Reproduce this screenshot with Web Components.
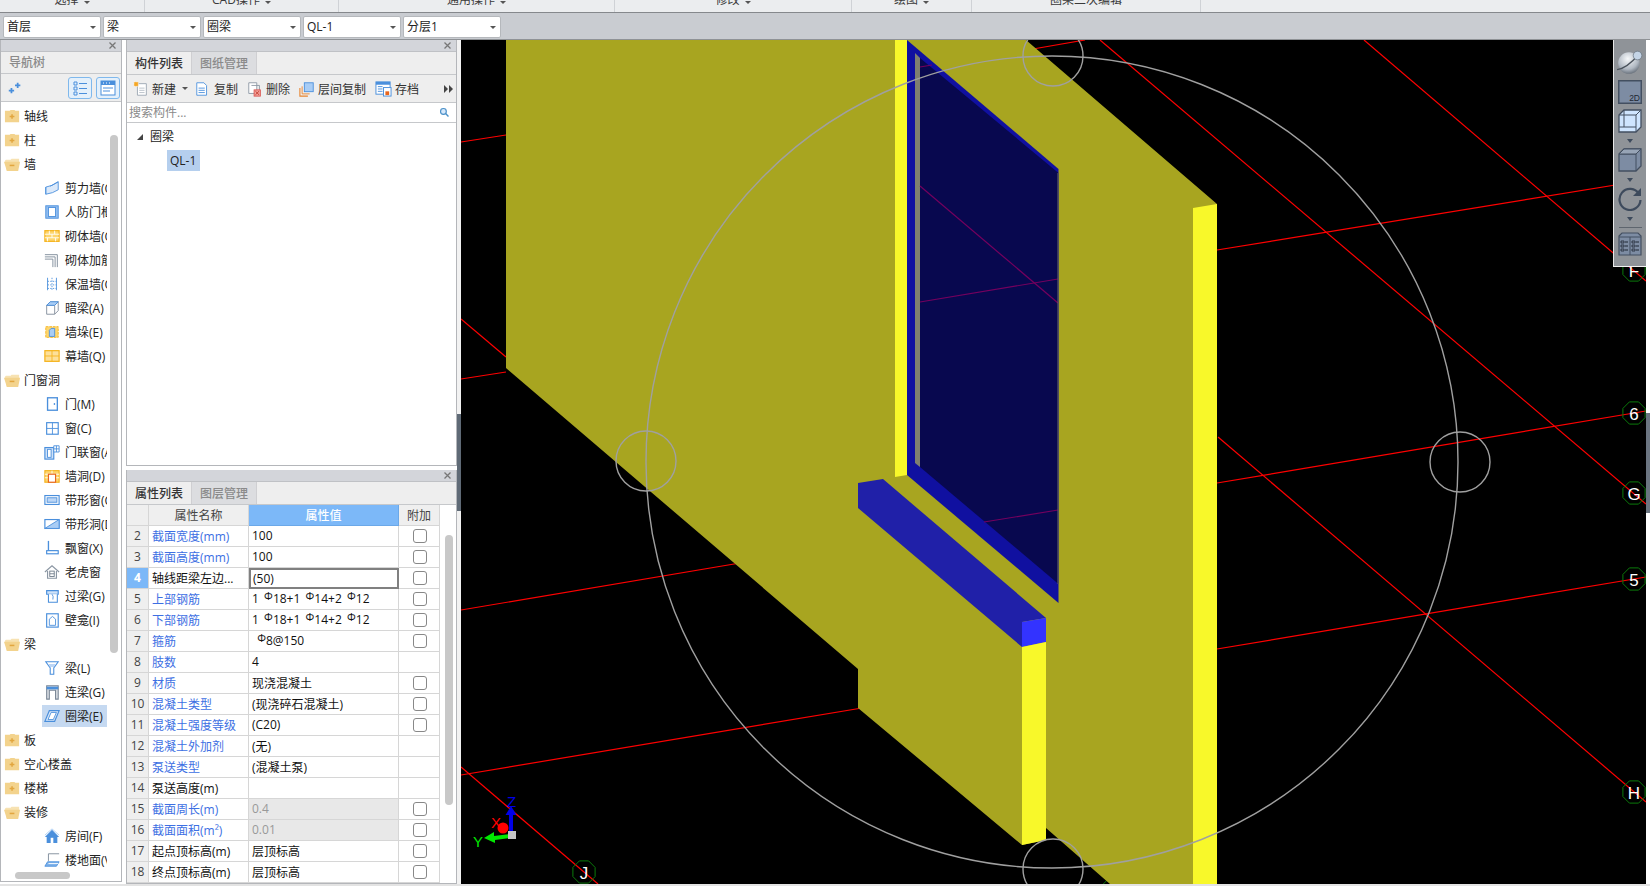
<!DOCTYPE html>
<html lang="zh">
<head>
<meta charset="utf-8">
<title>圈梁</title>
<style>
html, body
{
    margin: 0;
    height: 100%;
    overflow: hidden;
    background: #fff;
    font-family: "Open Sans", "Noto Sans CJK SC", "Liberation Sans", sans-serif;
    font-size: 12px;
    color: #222;
}
</style>
</head>
<body>
<gcl-app></gcl-app>

<script>
const BLUE = '#4a8fdc'
const ORANGE = '#f5b31e'

// all tree and toolbar icons, drawn on a 18x18 box
const ICONS =
{
    shear: `<path d="M2 8q7-1 14-6v9q-6 4-14 5z" fill="#dbe9fa" stroke="${BLUE}"/><path d="M2 8v8M7 7l9-5" stroke="${BLUE}" fill="none"/>`,
    frame: `<rect x="2" y="2" width="14" height="14" fill="#8fbcf0" stroke="${BLUE}"/><rect x="5" y="4" width="8" height="10" fill="#fff" stroke="${BLUE}"/>`,
    brick: `<rect x="1" y="3" width="16" height="12" fill="#fdd66f" stroke="${ORANGE}" stroke-width="1.4"/><path d="M1 7h16M1 11h16M6 3v4M12 3v4M9 7v4M4 11v4M13 11v4" stroke="#fff"/>`,
    rebar: `<path d="M1 3h14v14M1 5.500h11.500v11.500M1 8h9v9" fill="none" stroke="#7a8796"/>`,
    insul: `<path d="M4 2v14M14 2v14" stroke="${BLUE}"/><path d="M9 2v14M4 6h10M4 10h10M4 14h10" stroke="${BLUE}" stroke-dasharray="1.500 1.500"/>`,
    hidden: `<path d="M3 6l4-4h9v10l-4 4H3z" fill="#fff" stroke="#7f8b99"/><path d="M3 6h9v10M12 6l4-4" fill="none" stroke="#7f8b99"/><path d="M7 2h9l-4 4H3z" fill="#a9cdf5" stroke="${BLUE}"/>`,
    pier: `<rect x="2" y="3" width="14" height="12" fill="#fdd66f" stroke="${ORANGE}" stroke-dasharray="3 1"/><path d="M6 7l2-2h4v9H6z" fill="#a9cdf5" stroke="${BLUE}"/>`,
    curtain: `<rect x="1" y="3" width="16" height="12" fill="#fde09a" stroke="${ORANGE}" stroke-width="1.400"/><path d="M1 9h16M9 3v12" stroke="${ORANGE}"/>`,
    door: `<rect x="4" y="2" width="11" height="14" fill="#fff" stroke="${BLUE}" stroke-width="1.500"/><rect x="11" y="8" width="1.500" height="2" fill="${BLUE}"/>`,
    window: `<rect x="3" y="3" width="13" height="13" fill="#fff" stroke="${BLUE}" stroke-width="1.300"/><path d="M9.500 3v13M3 9.500h13" stroke="${BLUE}"/>`,
    doorwin: `<rect x="1" y="4" width="10" height="13" fill="#cfe2f9" stroke="${BLUE}" stroke-width="1.300"/><rect x="4" y="6" width="4" height="9" fill="#fff" stroke="${BLUE}"/><path d="M11 2h6v7h-6zM14 2v7M11 5.500h6" fill="#fff" stroke="${BLUE}"/>`,
    hole: `<rect x="1" y="3" width="16" height="13" fill="#fdd66f" stroke="${ORANGE}" stroke-width="1.300"/><path d="M1 7h16M1 11h16M9 3v4" stroke="#fff"/><rect x="5" y="7" width="8" height="9" fill="#fff" stroke="#e8661e" stroke-width="1.300"/>`,
    strip: `<rect x="1" y="4" width="16" height="10" fill="#fff" stroke="${BLUE}" stroke-width="1.300"/><rect x="3.500" y="6.500" width="11" height="5" fill="#bcd6f6" stroke="${BLUE}"/>`,
    striphole: `<rect x="1" y="4" width="16" height="10" fill="#fff" stroke="${BLUE}" stroke-width="1.300"/><path d="M1 14L17 4v10z" fill="#a9cdf5" stroke="${BLUE}"/>`,
    bay: `<path d="M5 1v11" stroke="${BLUE}" stroke-width="1.500"/><path d="M5 12h10" stroke="${BLUE}"/><rect x="3" y="12" width="13" height="3.500" fill="#fff" stroke="${BLUE}" stroke-width="1.300"/>`,
    dormer: `<path d="M1 9l8-7 8 7M4 8v8h10V8" fill="#fff" stroke="#8b96a3" stroke-width="1.300"/><rect x="6.500" y="8" width="5" height="6" fill="#fff" stroke="#6d7a88"/><path d="M6.500 11h5" stroke="#6d7a88"/>`,
    lintel: `<path d="M3 3h13v4H3z" fill="#cfe2f9" stroke="${BLUE}" stroke-width="1.300"/><path d="M5 7v9h10V7" fill="#fff" stroke="${BLUE}" stroke-width="1.200"/><path d="M9 7q2 2 1 6" fill="none" stroke="${BLUE}"/>`,
    niche: `<rect x="3" y="2" width="13" height="15" fill="#fff" stroke="${BLUE}" stroke-width="1.300"/><path d="M6 15V8l3.500-3 3.500 3v7z" fill="#fff" stroke="${BLUE}"/>`,
    beam: `<path d="M2 2h14l-5 7v7H7V9z" fill="#fff" stroke="${BLUE}" stroke-width="1.200"/><path d="M4.500 4.500h9L11 8H7z" fill="#bcd6f6"/>`,
    link: `<path d="M3 2h13v15h-3V7H6v10H3z" fill="#d9dde2" stroke="#7a8796" stroke-width="1.200"/><rect x="3" y="3" width="13" height="3" fill="${BLUE}"/>`,
    ring: `<path d="M6 3h11l-5 12H1z" fill="#dbe9fa" stroke="${BLUE}" stroke-width="1.300"/><path d="M8 5h6l-3.500 8H4.500z" fill="#fff" stroke="${BLUE}"/>`,
    room: `<path d="M1 10l8-8 8 8h-2v7H3v-7z" fill="${BLUE}"/><path d="M1 8l8-7 8 7" fill="none" stroke="#a9cdf5"/><rect x="7.500" y="11" width="3" height="6" fill="#fff"/>`,
    floor: `<path d="M5 10V2h12" fill="none" stroke="#7a8796"/><path d="M4 11h13l-3 5H1z" fill="#7db1ea" stroke="${BLUE}"/><path d="M5 13h11" stroke="#fff"/>`,
    folderplus: `<path d="M1 3h5l1-1h4l1 1h4v12H1z" fill="#f3d38d"/><path d="M6 9h5M8.500 6.500v5" stroke="#e2a63f" stroke-width="1.600"/>`,
    folderminus: `<path d="M1 5l1-1h5l1-1h8v4H4l-1 9z" fill="#f7e2b2"/><path d="M0 6h16l1 0-2 10H3z" fill="#f3d38d"/><path d="M6 10h5" stroke="#e2a63f" stroke-width="1.600"/>`,
    newdoc: `<path d="M5 3h10v13H5z" fill="#fff" stroke="#9aa5b1"/><path d="M7 8h6M7 10.500h6M7 13h6" stroke="#b6bec7"/><rect x="1" y="1" width="5" height="5" fill="#f5a623" stroke="#fff" stroke-dasharray="1 1"/>`,
    copydoc: `<path d="M2 2h8l3 3v11H2z" fill="#fff" stroke="${BLUE}"/><path d="M4 8h7M4 10.500h7M4 13h7" stroke="${BLUE}"/>`,
    deldoc: `<path d="M2 2h9v12H2z" fill="#fff" stroke="#8b96a3"/><path d="M5 5h9v8" fill="none" stroke="#8b96a3"/><rect x="8" y="10" width="7" height="7" fill="#f3a19a" stroke="#d9534f"/><path d="M9.500 11.500l4 4M13.500 11.500l-4 4" stroke="#c0392b"/>`,
    floorcopy: `<path d="M1 8v9h9" fill="none" stroke="#e8842e" stroke-width="1.200"/><path d="M3.500 6v8.500H12" fill="none" stroke="#e8842e"/><rect x="6" y="2" width="10" height="10" fill="#a9cdf5" stroke="${BLUE}"/>`,
    archive: `<rect x="1" y="2" width="15" height="13" fill="#fff" stroke="${BLUE}"/><rect x="1" y="2" width="15" height="3" fill="${BLUE}"/><path d="M3 7h5M3 9.500h5M3 12h5" stroke="${BLUE}"/><rect x="9" y="8" width="8" height="9" fill="#fff" stroke="${BLUE}"/><rect x="11" y="12" width="4" height="4" fill="#e8661e"/>`,
    pin: `<path d="M2 12h6M5 9v6M9 6h6M12 3v6" stroke="${BLUE}" stroke-width="2"/>`,
    listview: `<path d="M3 3h3v3H3zM3 8h3v3H3zM3 13h3v3H3z" fill="none" stroke="${BLUE}"/><path d="M8 4.500h8M8 9.500h8M8 14.500h8" stroke="${BLUE}"/>`,
    cardview: `<rect x="2" y="2" width="14" height="14" fill="#fff" stroke="${BLUE}"/><rect x="2" y="2" width="14" height="4" fill="${BLUE}"/><path d="M4 9h10M4 12h7" stroke="${BLUE}"/><path d="M4 4h1M7 4h1M10 4h1" stroke="#fff"/>`,
    search: `<circle cx="7.500" cy="7.500" r="4" fill="#d6e8fb" stroke="#4a90c8" stroke-width="1.600"/><path d="M10.500 10.500l4 4" stroke="#4a90c8" stroke-width="2"/>`
}

function iconSvg(name, size)
{
    return `<svg width="${size}" height="${size}" viewBox="0 0 18 18" style="display:block;flex:none">${ICONS[name]}</svg>`
}

/* GCL-RIBBON-TAIL: the bottom of the ribbon with its cut off group titles */

class GCLRibbonTail extends HTMLElement
{
    constructor()
    {
        super()

        const groups = [['选择', 145, 1], ['CAD操作', 194, 1], ['通用操作', 276, 1], ['修改', 237, 1], ['绘图', 120, 1], ['圈梁二次编辑', 229, 0]]

        this.attachShadow({mode: 'open'})

        this.shadowRoot.innerHTML =
        `
        <style>
        :host
        {
            display: flex;
            height: 12px;
            overflow: hidden;
            background: #ebedef;
            border-bottom: 1px solid #85888c;
        }
        .group
        {
            display: flex;
            justify-content: center;
            gap: 5px;
            height: 12px;
            box-sizing: border-box;
            border-right: 1px solid #cfd2d6;
            line-height: 12px;
            color: #3a3a3a;
        }
        .group span
        {
            margin-top: -6px;
        }
        .caret
        {
            margin-top: 1px;
            width: 0;
            height: 0;
            border: 3px solid transparent;
            border-top-color: #555;
        }
        </style>
        ${groups.map(g => `<div class="group" style="width:${g[1]}px"><span>${g[0]}</span>${g[2] ? '<i class="caret"></i>' : ''}</div>`).join('')}
        `
    }
}

customElements.define('gcl-ribbon-tail', GCLRibbonTail)

/* GCL-COMBO */

const comboTemplate = document.createElement('template')

comboTemplate.innerHTML =
`
<style>
:host
{
    display: flex;
    align-items: center;
    justify-content: space-between;
    box-sizing: border-box;
    width: 98px;
    height: 22px;
    padding: 0 4px 1px 3px;
    background: #fff;
    border: 1px solid #b5b8bc;
    border-radius: 2px;
    font-size: 12px;
    line-height: 16px;
    color: #222;
}
i
{
    width: 0;
    height: 0;
    margin-top: 4px;
    border: 3px solid transparent;
    border-top-color: #555;
}
</style>
<slot></slot><i></i>
`

class GCLCombo extends HTMLElement
{
    constructor()
    {
        super()

        this.attachShadow({mode: 'open'})

        this.shadowRoot.appendChild(comboTemplate.content.cloneNode(true))
    }
}

customElements.define('gcl-combo', GCLCombo)

/* GCL-COMBO-BAR */

const comboBarTemplate = document.createElement('template')

comboBarTemplate.innerHTML =
`
<style>
:host
{
    display: flex;
    align-items: flex-start;
    gap: 2px;
    box-sizing: border-box;
    height: 27px;
    padding: 3px 0 0 3px;
    background: #c9ccd1;
    border-bottom: 1px solid #8f9296;
}
</style>
<gcl-combo>首层</gcl-combo>
<gcl-combo>梁</gcl-combo>
<gcl-combo>圈梁</gcl-combo>
<gcl-combo>QL-1</gcl-combo>
<gcl-combo>分层1</gcl-combo>
`

class GCLComboBar extends HTMLElement
{
    constructor()
    {
        super()

        this.attachShadow({mode: 'open'})

        this.shadowRoot.appendChild(comboBarTemplate.content.cloneNode(true))
    }
}

customElements.define('gcl-combo-bar', GCLComboBar)

/* GCL-PANEL: grey strip with a close cross, and the content under it */

const panelTemplate = document.createElement('template')

panelTemplate.innerHTML =
`
<style>
:host
{
    display: flex;
    flex-direction: column;
    box-sizing: border-box;
    border: 1px solid #b4b6ba;
    border-top: 0;
    background: #fff;
    overflow: hidden;
}
#strip
{
    flex: none;
    display: flex;
    align-items: center;
    justify-content: flex-end;
    box-sizing: border-box;
    height: 12px;
    padding-right: 5px;
    background: #d3d5da;
    border-bottom: 1px solid #bfc1c5;
}
</style>
<div id="strip">
    <svg width="7" height="7" viewBox="0 0 7 7"><path d="M.5.500l6 6M6.500.500l-6 6" stroke="#777" stroke-width="1.300"/></svg>
</div>
<slot></slot>
`

class GCLPanel extends HTMLElement
{
    constructor()
    {
        super()

        this.attachShadow({mode: 'open'})

        this.shadowRoot.appendChild(panelTemplate.content.cloneNode(true))
    }
}

customElements.define('gcl-panel', GCLPanel)

/* GCL-TABS */

const tabsTemplate = document.createElement('template')

tabsTemplate.innerHTML =
`
<style>
:host
{
    display: flex;
    flex: none;
    height: 23px;
    box-sizing: border-box;
    background: #eee;
    border-bottom: 1px solid #c6c8cb;
}
span
{
    display: flex;
    align-items: center;
    padding: 0 8px 1px;
    width: 48px;
    font-weight: 500;
    color: #333;
    white-space: nowrap;
}
span + span
{
    background: #dcdde0;
    color: #8a8a8a;
    border-left: 1px solid #cfcfd2;
    border-right: 1px solid #cfcfd2;
}
</style>
`

class GCLTabs extends HTMLElement
{
    constructor()
    {
        super()

        this.attachShadow({mode: 'open'})

        this.shadowRoot.appendChild(tabsTemplate.content.cloneNode(true))
    }

    connectedCallback()
    {
        this.getAttribute('items').split(',').forEach(item =>
        {
            const tab = document.createElement('span')

            tab.textContent = item

            this.shadowRoot.appendChild(tab)
        })
    }
}

customElements.define('gcl-tabs', GCLTabs)

/* GCL-TREE-ROW */

const treeRowTemplate = document.createElement('template')

treeRowTemplate.innerHTML =
`
<style>
:host
{
    display: flex;
    align-items: center;
    box-sizing: border-box;
    height: 24px;
    white-space: nowrap;
    overflow: hidden;
    color: #222;
}
:host([depth="0"])
{
    padding-left: 3px;
}
:host([depth="0"]) #box
{
    gap: 3px;
}
:host([depth="1"])
{
    padding-left: 43px;
}
#box
{
    display: flex;
    align-items: center;
    gap: 5px;
    height: 22px;
    margin-left: -2px;
    padding-left: 2px;
    flex: 1;
    overflow: hidden;
}
:host([selected]) #box
{
    background: #c5d9f1;
}
</style>
<div id="box"><span id="icon"></span><slot></slot></div>
`

class GCLTreeRow extends HTMLElement
{
    constructor()
    {
        super()

        this.attachShadow({mode: 'open'})

        this.shadowRoot.appendChild(treeRowTemplate.content.cloneNode(true))
    }

    connectedCallback()
    {
        const depth = this.getAttribute('depth')

        this.shadowRoot.querySelector('#icon').outerHTML = iconSvg(this.getAttribute('icon'), depth == '0' ? 17 : 16)
    }
}

customElements.define('gcl-tree-row', GCLTreeRow)

/* GCL-NAV-PANEL */

const NAV_ROWS =
[
    ['folderplus', '轴线'], ['folderplus', '柱'], ['folderminus', '墙'],
    ['shear', '剪力墙(Q)', 1], ['frame', '人防门框墙(RF)', 1], ['brick', '砌体墙(Q)', 1], ['rebar', '砌体加筋(Y)', 1],
    ['insul', '保温墙(Q)', 1], ['hidden', '暗梁(A)', 1], ['pier', '墙垛(E)', 1], ['curtain', '幕墙(Q)', 1],
    ['folderminus', '门窗洞'],
    ['door', '门(M)', 1], ['window', '窗(C)', 1], ['doorwin', '门联窗(A)', 1], ['hole', '墙洞(D)', 1], ['strip', '带形窗(C)', 1],
    ['striphole', '带形洞(D)', 1], ['bay', '飘窗(X)', 1], ['dormer', '老虎窗', 1], ['lintel', '过梁(G)', 1], ['niche', '壁龛(I)', 1],
    ['folderminus', '梁'],
    ['beam', '梁(L)', 1], ['link', '连梁(G)', 1], ['ring', '圈梁(E)', 1, 1],
    ['folderplus', '板'], ['folderplus', '空心楼盖'], ['folderplus', '楼梯'], ['folderminus', '装修'],
    ['room', '房间(F)', 1], ['floor', '楼地面(V)', 1]
]

class GCLNavPanel extends HTMLElement
{
    constructor()
    {
        super()

        const rows = NAV_ROWS.map(r => `<gcl-tree-row icon="${r[0]}" depth="${r[2] || 0}" ${r[3] ? 'selected' : ''}>${r[1]}</gcl-tree-row>`).join('')

        this.attachShadow({mode: 'open'})

        this.shadowRoot.innerHTML =
        `
        <style>
        :host
        {
            display: block;
            flex: none;
            width: 122px;
            height: 842px;
        }
        gcl-panel
        {
            height: 100%;
        }
        #title
        {
            flex: none;
            display: flex;
            align-items: center;
            box-sizing: border-box;
            height: 22px;
            padding: 0 0 2px 8px;
            background: #eee;
            border-bottom: 1px solid #c6c8cb;
            color: #8a8a8a;
            font-weight: 500;
        }
        #tools
        {
            flex: none;
            display: flex;
            align-items: center;
            gap: 4px;
            box-sizing: border-box;
            height: 28px;
            padding: 0 1px 0 6px;
            background: #eee;
            border-bottom: 1px solid #c6c8cb;
        }
        #tools .btn
        {
            display: flex;
            align-items: center;
            justify-content: center;
            width: 24px;
            height: 22px;
            box-sizing: border-box;
            background: #e4f0fb;
            border: 1px solid #7fb8ec;
            border-radius: 3px;
        }
        #tools .btn:first-of-type
        {
            margin-left: auto;
        }
        #body
        {
            position: relative;
            flex: 1;
            padding-top: 2px;
            overflow: hidden;
        }
        #rows
        {
            width: 106px;
        }
        #vbar
        {
            position: absolute;
            left: 109px;
            top: 33px;
            width: 8px;
            height: 518px;
            border-radius: 4px;
            background: #c8c8c8;
        }
        #hbar
        {
            position: absolute;
            left: 14px;
            top: 770px;
            width: 55px;
            height: 7px;
            border-radius: 4px;
            background: #c8c8c8;
        }
        </style>
        <gcl-panel>
            <div id="title">导航树</div>
            <div id="tools">
                ${iconSvg('pin', 16)}
                <div class="btn">${iconSvg('listview', 18)}</div>
                <div class="btn">${iconSvg('cardview', 18)}</div>
            </div>
            <div id="body">
                <div id="rows">${rows}</div>
                <div id="vbar"></div>
                <div id="hbar"></div>
            </div>
        </gcl-panel>
        `
    }
}

customElements.define('gcl-nav-panel', GCLNavPanel)

/* GCL-COMPONENT-PANEL */

class GCLComponentPanel extends HTMLElement
{
    constructor()
    {
        super()

        this.attachShadow({mode: 'open'})

        this.shadowRoot.innerHTML =
        `
        <style>
        :host
        {
            display: block;
            flex: none;
            height: 426px;
        }
        gcl-panel
        {
            height: 100%;
        }
        #tools
        {
            flex: none;
            display: flex;
            align-items: center;
            box-sizing: border-box;
            height: 28px;
            padding-left: 6px;
            background: #eee;
            border-bottom: 1px solid #c6c8cb;
            color: #333;
            white-space: nowrap;
        }
        #tools span
        {
            margin-left: 3px;
        }
        #tools .caret
        {
            margin: 3px 0 0 6px;
            border: 3px solid transparent;
            border-top-color: #555;
        }
        #tools .item
        {
            display: flex;
            align-items: center;
            margin-left: 9px;
        }
        #tools .more
        {
            margin-left: auto;
            margin-right: 3px;
        }
        #search
        {
            flex: none;
            display: flex;
            align-items: center;
            justify-content: space-between;
            box-sizing: border-box;
            height: 20px;
            padding: 0 5px 1px 2px;
            border-bottom: 1px solid #c6c8cb;
            color: #8a8a8a;
        }
        #tree
        {
            flex: 1;
            padding: 4px 0 0 10px;
        }
        #root
        {
            display: flex;
            align-items: center;
            gap: 7px;
            height: 18px;
        }
        #root i
        {
            width: 0;
            height: 0;
            margin-top: 2px;
            border-left: 6px solid transparent;
            border-bottom: 6px solid #444;
        }
        #leaf
        {
            display: inline-flex;
            align-items: center;
            margin: 5px 0 0 30px;
            padding: 0 4px 1px 3px;
            height: 20px;
            background: #b5cfee;
        }
        </style>
        <gcl-panel>
            <gcl-tabs items="构件列表,图纸管理"></gcl-tabs>
            <div id="tools">
                ${iconSvg('newdoc', 16)}<span>新建</span><i class="caret"></i>
                <div class="item" style="margin-left:7px">${iconSvg('copydoc', 16)}<span>复制</span></div>
                <div class="item">${iconSvg('deldoc', 16)}<span>删除</span></div>
                <div class="item">${iconSvg('floorcopy', 16)}<span>层间复制</span></div>
                <div class="item">${iconSvg('archive', 17)}<span>存档</span></div>
                <svg class="more" width="9" height="8" viewBox="0 0 9 8"><path d="M0 0l4 4-4 4zM5 0l4 4-4 4z" fill="#444"/></svg>
            </div>
            <div id="search">搜索构件...${iconSvg('search', 13)}</div>
            <div id="tree">
                <div id="root"><i></i>圈梁</div>
                <div id="leaf">QL-1</div>
            </div>
        </gcl-panel>
        `
    }
}

customElements.define('gcl-component-panel', GCLComponentPanel)

/* GCL-PROPS-TABLE */

const REBAR = '<b>Φ</b>'

// number, name, value, linked (blue name), checkbox, greyed value
const PROP_ROWS =
[
    [2, '截面宽度(mm)', '100', 1, 1],
    [3, '截面高度(mm)', '100', 1, 1],
    [4, '轴线距梁左边...', '(50)', 0, 1],
    [5, '上部钢筋', `1${REBAR}18+1${REBAR}14+2${REBAR}12`, 1, 1],
    [6, '下部钢筋', `1${REBAR}18+1${REBAR}14+2${REBAR}12`, 1, 1],
    [7, '箍筋', `${REBAR}8@150`, 1, 1],
    [8, '肢数', '4', 1, 0],
    [9, '材质', '现浇混凝土', 1, 1],
    [10, '混凝土类型', '(现浇碎石混凝土)', 1, 1],
    [11, '混凝土强度等级', '(C20)', 1, 1],
    [12, '混凝土外加剂', '(无)', 1, 0],
    [13, '泵送类型', '(混凝土泵)', 1, 0],
    [14, '泵送高度(m)', '', 0, 0],
    [15, '截面周长(m)', '0.4', 1, 1, 1],
    [16, '截面面积(m²)', '0.01', 1, 1, 1],
    [17, '起点顶标高(m)', '层顶标高', 0, 1],
    [18, '终点顶标高(m)', '层顶标高', 0, 1]
]

class GCLPropsTable extends HTMLElement
{
    constructor()
    {
        super()

        const rows = PROP_ROWS.map(r =>
        {
            const sel = r[0] == 4 ? ' sel' : ''

            return `<div class="cell num${sel}">${r[0]}</div>` +
                   `<div class="cell name${r[3] ? ' link' : ''}">${r[1]}</div>` +
                   `<div class="cell value${sel}${r[5] ? ' grey' : ''}">${r[2]}</div>` +
                   `<div class="cell add">${r[4] ? '<i></i>' : ''}</div>`
        }).join('')

        this.attachShadow({mode: 'open'})

        this.shadowRoot.innerHTML =
        `
        <style>
        :host
        {
            display: block;
            position: relative;
            flex: 1;
            overflow: hidden;
        }
        #grid
        {
            display: grid;
            grid-template-columns: 22px 100px 150px 41px;
            grid-auto-rows: 21px;
            width: 313px;
        }
        .cell
        {
            display: flex;
            align-items: center;
            box-sizing: border-box;
            padding-bottom: 1px;
            border-right: 1px solid #d6d6d6;
            border-bottom: 1px solid #d6d6d6;
            white-space: nowrap;
            overflow: hidden;
        }
        .head
        {
            justify-content: center;
            background: #efefef;
            color: #444;
        }
        .head.on
        {
            background: #7cb8f8;
            color: #fff;
            font-weight: 500;
            border-color: #6ba8e8;
        }
        .num
        {
            justify-content: center;
            background: #efefef;
            color: #444;
        }
        .num.sel
        {
            background: #7cb8f8;
            color: #fff;
            font-weight: 700;
        }
        .name
        {
            padding-left: 3px;
            color: #111;
        }
        .name.link
        {
            color: #3d6fe3;
        }
        .value
        {
            padding-left: 3px;
            color: #111;
        }
        .value b
        {
            display: inline-block;
            width: 14px;
            margin-top: -5px;
            font-size: 11px;
            line-height: 12px;
            font-weight: 400;
            text-align: right;
        }
        .value.sel
        {
            border: 2px solid #808080;
            padding-left: 2px;
        }
        .value.grey
        {
            background: #e8e8e8;
            color: #999;
        }
        .add
        {
            justify-content: center;
            padding-bottom: 0;
        }
        .add i
        {
            width: 14px;
            height: 14px;
            box-sizing: border-box;
            margin-left: 1px;
            border: 1px solid #888;
            border-radius: 3px;
            background: #fff;
        }
        #bar
        {
            position: absolute;
            left: 318px;
            top: 30px;
            width: 8px;
            height: 270px;
            border-radius: 4px;
            background: #c8c8c8;
        }
        </style>
        <div id="grid">
            <div class="cell head"></div>
            <div class="cell head">属性名称</div>
            <div class="cell head on">属性值</div>
            <div class="cell head">附加</div>
            ${rows}
        </div>
        <div id="bar"></div>
        `
    }
}

customElements.define('gcl-props-table', GCLPropsTable)

/* GCL-PROPS-PANEL */

const propsPanelTemplate = document.createElement('template')

propsPanelTemplate.innerHTML =
`
<style>
:host
{
    display: block;
    flex: 1;
    min-height: 0;
}
gcl-panel
{
    height: 100%;
}
</style>
<gcl-panel>
    <gcl-tabs items="属性列表,图层管理"></gcl-tabs>
    <gcl-props-table></gcl-props-table>
</gcl-panel>
`

class GCLPropsPanel extends HTMLElement
{
    constructor()
    {
        super()

        this.attachShadow({mode: 'open'})

        this.shadowRoot.appendChild(propsPanelTemplate.content.cloneNode(true))
    }
}

customElements.define('gcl-props-panel', GCLPropsPanel)

/* GCL-VIEW-TOOLS: floating toolbar on the canvas */

const viewToolsTemplate = document.createElement('template')

viewToolsTemplate.innerHTML =
`
<style>
:host
{
    position: absolute;
    top: 0;
    right: 0;
    display: flex;
    flex-direction: column;
    align-items: center;
    box-sizing: border-box;
    width: 33px;
    height: 227px;
    padding-top: 8px;
    background: #8f9398;
    border-left: 1px solid #e8e8e8;
    border-bottom: 1px solid #f2f2f2;
}
svg
{
    display: block;
    flex: none;
}
i
{
    flex: none;
    width: 0;
    height: 0;
    margin: 6px 0 5px;
    border: 3.500px solid transparent;
    border-top-color: #3d4a5c;
    border-bottom-width: 0;
    border-top-width: 4px;
}
hr
{
    width: 23px;
    margin: 1px 0 4px;
    border: 0;
    border-top: 1px solid #5e656e;
}
</style>
<svg width="28" height="28" viewBox="0 0 26 26">
    <defs>
        <radialGradient id="ball" cx="0.45" cy="0.3" r="0.8"><stop offset="0" stop-color="#f7f9fb"/><stop offset="0.6" stop-color="#b0b8c2"/><stop offset="1" stop-color="#4c5560"/></radialGradient>
    </defs>
    <circle cx="12" cy="14" r="10" fill="url(#ball)"/>
    <path d="M1 20q9-1 20-14" fill="none" stroke="#4a525c" stroke-width="1.200"/>
    <circle cx="20" cy="7" r="4" fill="#c4d4e6" stroke="#5f6b78" stroke-width=".6"/>
</svg>
<svg width="24" height="24" viewBox="0 0 24 24" style="margin-top:4px">
    <rect x=".75" y=".75" width="22.500" height="22.500" fill="#7d8ca3" stroke="#434f60" stroke-width="1.500"/>
    <text x="22" y="21" text-anchor="end" font-family="Liberation Sans, sans-serif" font-size="8.500" fill="#1e2733">2D</text>
</svg>
<svg width="24" height="24" viewBox="0 0 24 24" style="margin-top:5px">
    <path d="M1 6l5-5h17v17l-5 5H1z" fill="#cfe5ff" stroke="#434f60" stroke-width="1.300"/>
    <path d="M1 6h17v17M18 6l5-5M1 18h17M6 1v17" fill="none" stroke="#434f60"/>
</svg>
<i></i>
<svg width="24" height="24" viewBox="0 0 24 24">
    <path d="M1 6l5-5h17v17l-5 5H1z" fill="#7d8ca3" stroke="#434f60" stroke-width="1.300"/>
    <path d="M1 6h17v17M18 6l5-5" fill="none" stroke="#434f60"/>
    <path d="M1 6l5-5h17l-5 5z" fill="#97a4b6" stroke="#434f60"/>
</svg>
<i></i>
<svg width="24" height="24" viewBox="0 0 24 24">
    <path d="M21 7A10.500 10.500 0 1 0 22.500 13" fill="none" stroke="#3d4a5c" stroke-width="2.200"/>
    <path d="M23 1v8h-8z" fill="#3d4a5c"/>
</svg>
<i></i>
<hr>
<svg width="24" height="24" viewBox="0 0 24 24">
    <path d="M1 4l3-3h16l3 3v19H1z" fill="#7d8ca3" stroke="#434f60" stroke-width="1.200"/>
    <path d="M1 5h22M12 5v18" stroke="#434f60"/>
    <path d="M3 9h3v2H3zM3 13h3v2H3zM3 17h3v2H3zM14 9h3v2h-3zM14 13h3v2h-3zM14 17h3v2h-3z" fill="none" stroke="#1e2733" stroke-width=".8"/>
    <path d="M7 10h3M7 14h3M7 18h3M18 10h3M18 14h3M18 18h3" stroke="#1e2733"/>
</svg>
`

class GCLViewTools extends HTMLElement
{
    constructor()
    {
        super()

        this.attachShadow({mode: 'open'})

        this.shadowRoot.appendChild(viewToolsTemplate.content.cloneNode(true))
    }
}

customElements.define('gcl-view-tools', GCLViewTools)

/* GCL-VIEWPORT: the 3D drawing, in page coordinates */

const GRID_LINES =
[
    [1100, 40, 1646, 504], [1364, 40, 1646, 281], [1218, 437, 1646, 802], [461, 767, 598, 884],
    [461, 319, 506, 357], [461, 142, 506, 135], [461, 379, 506, 372], [461, 610, 740, 563], [461, 775, 862, 708],
    [1217, 250, 1646, 180], [1217, 483, 1646, 411], [1217, 649, 1646, 577], [1033, 49, 1085, 40]
]

const WINDOW_LINES = [[920, 186, 1058, 303], [920, 302, 1058, 279], [984, 522, 1058, 510], [920, 67, 932, 65]]

const AXIS_MARKS = [['F', 1634, 270], ['6', 1634, 413], ['G', 1634, 493], ['5', 1634, 579], ['H', 1634, 792], ['J', 584, 872]]

function octagon(x, y, r)
{
    const points = []

    for(let i = 0; i < 8; i++)
    {
        const a = Math.PI / 8 + i * Math.PI / 4

        points.push((x + r * Math.cos(a)).toFixed(1) + ',' + (y + r * Math.sin(a)).toFixed(1))
    }

    return points.join(' ')
}

class GCLViewport extends HTMLElement
{
    constructor()
    {
        super()

        const lines = (list, color) => list.map(l => `<line x1="${l[0]}" y1="${l[1]}" x2="${l[2]}" y2="${l[3]}" stroke="${color}" stroke-width="1.200"/>`).join('')
        const marks = AXIS_MARKS.map(m => `<polygon points="${octagon(m[1], m[2], 12)}" fill="none" stroke="#0b7a0b"/>` +
            `<text x="${m[1]}" y="${m[2] + 6.500}" text-anchor="middle" font-family="Liberation Sans, sans-serif" font-size="17" fill="#fff">${m[0]}</text>`).join('')

        this.attachShadow({mode: 'open'})

        this.shadowRoot.innerHTML =
        `
        <style>
        :host
        {
            display: block;
            position: relative;
            flex: none;
            width: 1185px;
            height: 844px;
            background: #000;
            overflow: hidden;
        }
        svg
        {
            display: block;
        }
        </style>
        <svg width="1185" height="844" viewBox="461 40 1185 844">
            ${lines(GRID_LINES, '#f00')}
            <polygon points="${octagon(1113, 890, 12)}" fill="none" stroke="#0b7a0b"/>

            <polygon points="506,40 1026,40 1217,204 1217,884 1110,884 1046,828 1046,840 1022,845 858,708 858,669 506,368" fill="#a8a520"/>

            <polygon points="907,40 1058.500,169 1058.500,603 907,475" fill="#1010a0"/>
            <polygon points="920,58 1058.500,173 1058.500,584 920,467" fill="#08084f"/>
            <polygon points="915,53 920,58 920,467 915,463" fill="#7f7f70"/>
            ${lines(WINDOW_LINES, '#75005e')}
            <line x1="1058" y1="173" x2="1058" y2="584" stroke="#6a6a68"/>
            <polygon points="895,40 907,40 907,475 895,477" fill="#f8f82a"/>

            <polygon points="858,483 883,479 1046,618 1022,622 1022,647 858,508" fill="#2020a8"/>
            <polygon points="1022,622 1046,618 1046,642 1022,647" fill="#3333ff"/>
            <polygon points="1022,647 1046,642 1046,840 1022,845" fill="#f8f82a"/>
            <polygon points="1193,208 1217,204 1217,884 1193,884" fill="#f8f82a"/>

            <g fill="none" stroke="#a0a0a0" stroke-width="1.400">
                <circle cx="1052" cy="462" r="406"/>
                <circle cx="1053" cy="56" r="30"/>
                <circle cx="1053" cy="869" r="30"/>
                <circle cx="646" cy="461" r="30"/>
                <circle cx="1460" cy="462" r="30"/>
            </g>

            ${marks}

            <g font-family="Liberation Sans, sans-serif" font-size="15">
                <circle cx="503" cy="828" r="5.500" fill="#f00"/>
                <path d="M509 833v-18h-3.500l5.500-9 5.500 9H513v18z" fill="#0000e8"/>
                <path d="M510 834l-16 2v-4l-10 6 11 5v-3l15-2z" fill="#00e800"/>
                <rect x="508" y="831" width="8" height="8" fill="#c4c4c4"/>
                <text x="507" y="807" fill="#0000e8">Z</text>
                <text x="491" y="828" fill="#f00">X</text>
                <text x="473" y="847" fill="#00e800">Y</text>
            </g>
        </svg>
        <gcl-view-tools></gcl-view-tools>
        `
    }
}

customElements.define('gcl-viewport', GCLViewport)

/* GCL-APP */

const appTemplate = document.createElement('template')

appTemplate.innerHTML =
`
<style>
:host
{
    display: flex;
    flex-direction: column;
    width: 1650px;
    height: 886px;
    overflow: hidden;
    background: #fff;
}
#main
{
    display: flex;
    height: 844px;
    flex: none;
}
#column
{
    display: flex;
    flex-direction: column;
    gap: 4px;
    flex: none;
    width: 331px;
    margin-left: 4px;
}
#splitter
{
    display: flex;
    align-items: center;
    flex: none;
    width: 4px;
    background: #f2f2f2;
}
#splitter i
{
    width: 4px;
    height: 97px;
    background: #5f6a76;
}
#edge
{
    display: flex;
    align-items: flex-start;
    flex: 1;
    padding-top: 373px;
}
#edge i
{
    width: 4px;
    height: 100px;
    background: #6b7581;
}
#foot
{
    flex: 1;
    background: #e3e3e3;
}
</style>
<gcl-ribbon-tail></gcl-ribbon-tail>
<gcl-combo-bar></gcl-combo-bar>
<div id="main">
    <gcl-nav-panel></gcl-nav-panel>
    <div id="column">
        <gcl-component-panel></gcl-component-panel>
        <gcl-props-panel></gcl-props-panel>
    </div>
    <div id="splitter"><i></i></div>
    <gcl-viewport></gcl-viewport>
    <div id="edge"><i></i></div>
</div>
<div id="foot"></div>
`

class GCLApp extends HTMLElement
{
    constructor()
    {
        super()

        this.attachShadow({mode: 'open'})

        this.shadowRoot.appendChild(appTemplate.content.cloneNode(true))
    }
}

customElements.define('gcl-app', GCLApp)
</script>
</body>
</html>
